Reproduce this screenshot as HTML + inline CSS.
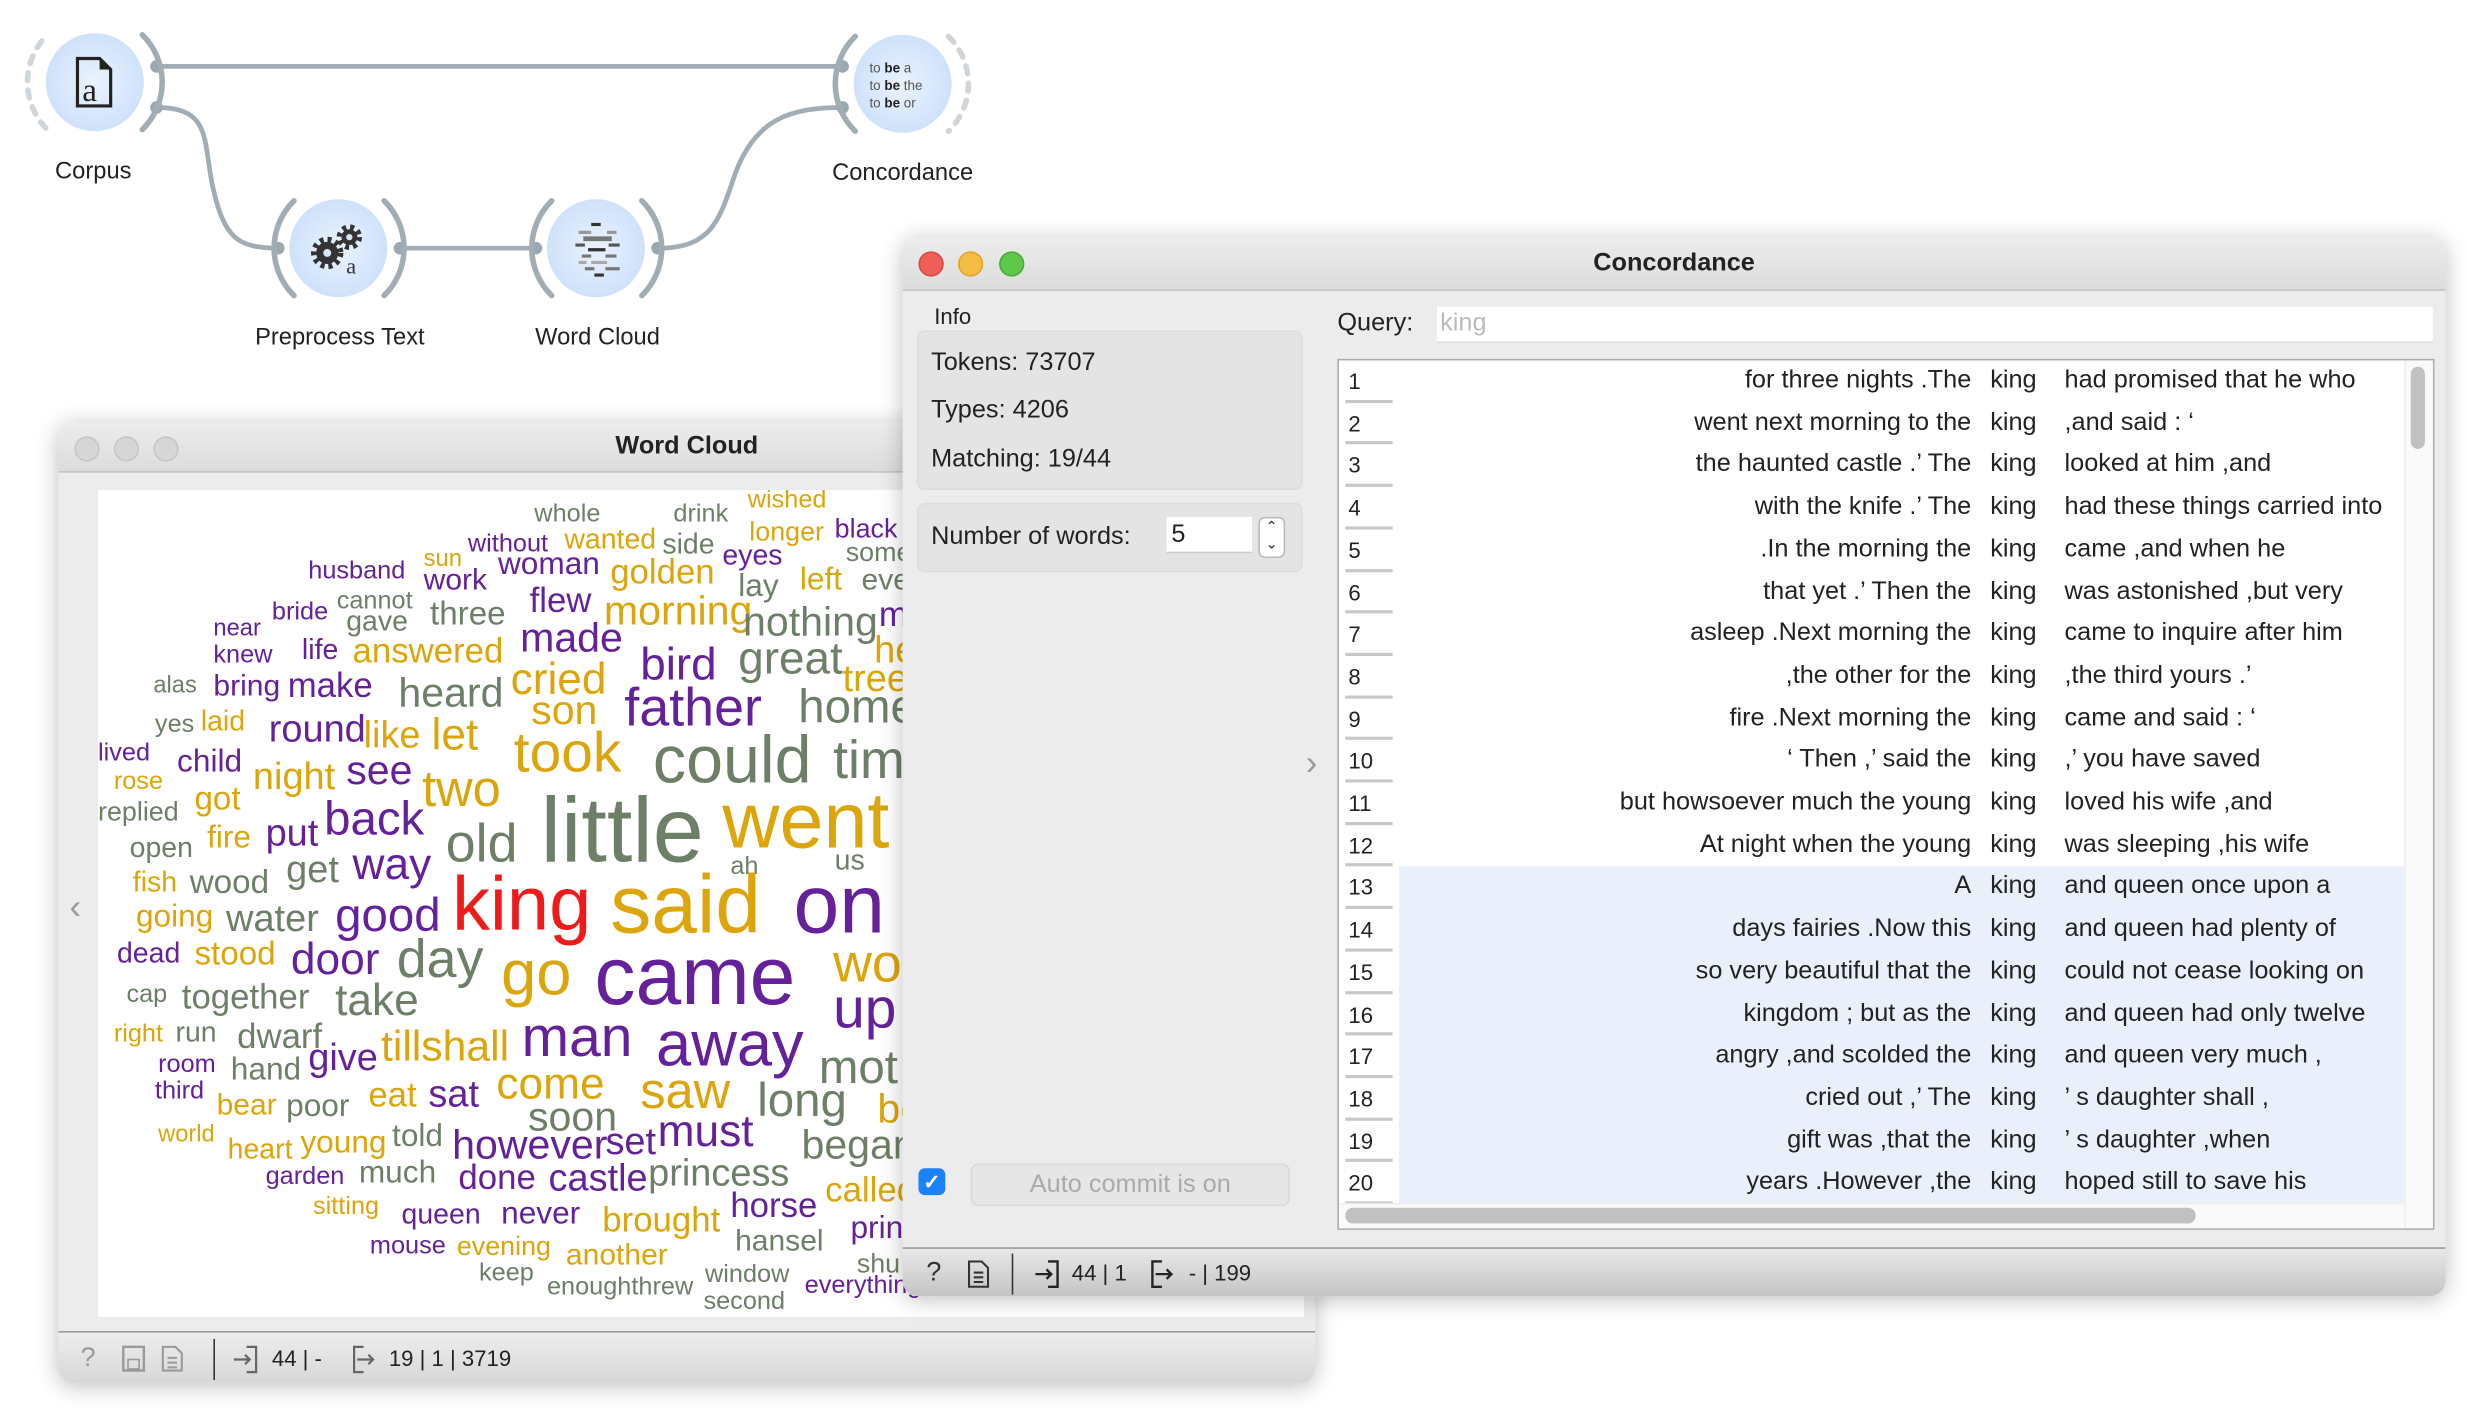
<!DOCTYPE html>
<html><head><meta charset="utf-8">
<style>
html,body{margin:0;padding:0;background:#fff;overflow:hidden;width:2466px;height:1414px}
#s{position:absolute;left:0;top:0;width:1560px;height:895px;transform:scale(1.5808);transform-origin:0 0;font-family:"Liberation Sans",sans-serif;color:#222}
.abs{position:absolute}
.lbl{position:absolute;font-size:15px;color:#222;transform:translateX(-50%);white-space:nowrap}
.win{position:absolute;background:#ececec;border-radius:10px;overflow:hidden;box-shadow:0 2px 14px rgba(0,0,0,.25)}
.tb{position:absolute;left:0;right:0;top:0;background:linear-gradient(#ededed,#dcdcdc);border-bottom:1px solid #c2c2c2;font-weight:bold;font-size:16px;text-align:center}
.dot{position:absolute;width:14px;height:14px;border-radius:50%}
.wc span{position:absolute;white-space:nowrap;line-height:1}
.p{color:#65219a}.g{color:#6e7f68}.y{color:#dca50c}.r{color:#ee1b1b}
.sb{position:absolute;left:0;right:0;bottom:0;background:linear-gradient(#ededed,#d7d7d7);border-top:1px solid #9a9a9a;font-size:14px}
.row{position:absolute;left:0;right:0;height:26.7px;font-size:16px;line-height:26.7px}
.row .n{position:absolute;left:0;width:38px;padding-left:6px;box-sizing:border-box;font-size:14px}
.row .n:after{content:"";position:absolute;left:4px;right:4px;bottom:0;height:2px;background:#c8c8c8}
.row .l{position:absolute;right:274px;white-space:nowrap}
.row .k{position:absolute;left:412px}
.row .rc{position:absolute;left:459px;white-space:nowrap}
</style></head><body><div id="s">

<svg class="abs" style="left:0;top:0" width="640" height="240">
<defs><radialGradient id="ng" cx="50%" cy="50%" r="50%"><stop offset="0" stop-color="#eaf2fd"/><stop offset="1" stop-color="#cfe2fb"/></radialGradient></defs>
<g fill="none" stroke="#a1adb5" stroke-width="3">
<path d="M99,42 L533,42"/>
<path d="M99,68 C135,68 128,90 135,120 C142,150 150,157 176,157"/>
<path d="M253,157 L339,157"/>
<path d="M416,157 C450,157 455,140 465,110 C478,75 500,68 533,68"/>
</g>
<g fill="#9aa8b0"><circle cx="99" cy="42" r="4"/><circle cx="99" cy="68" r="4"/><circle cx="533" cy="42" r="4"/><circle cx="533" cy="68" r="4"/><circle cx="176" cy="157" r="4"/><circle cx="253" cy="157" r="4"/><circle cx="339" cy="157" r="4"/><circle cx="416" cy="157" r="4"/></g>
<circle cx="60" cy="52" r="31" fill="url(#ng)"/>
<circle cx="214" cy="157" r="31" fill="url(#ng)"/>
<circle cx="377" cy="157" r="31" fill="url(#ng)"/>
<circle cx="571" cy="53" r="31" fill="url(#ng)"/>
<g fill="none" stroke="#a1adb5" stroke-width="3.5" stroke-linecap="round">
<path d="M31,23 A42,42 0 0 1 31,81" stroke="#cfd5d9" stroke-dasharray="5,6" transform="translate(-2,0) rotate(180 31 52)"/>
<path d="M90,22 A42,42 0 0 1 90,82"/>
<path d="M186,127 A42,42 0 0 0 186,187"/><path d="M243,127 A42,42 0 0 1 243,187"/>
<path d="M349,127 A42,42 0 0 0 349,187"/><path d="M406,127 A42,42 0 0 1 406,187"/>
<path d="M541,23 A42,42 0 0 0 541,83"/>
<path d="M600,23 A42,42 0 0 1 600,83" stroke="#cfd5d9" stroke-dasharray="5,6"/>
</g>
<path d="M49,37 H63 L70,44 V67 H49 Z" fill="none" stroke="#222" stroke-width="2"/>
<path d="M63,37 V44 H70" fill="#222"/>
<text x="52" y="64" font-family="Liberation Serif" font-size="21" fill="#222">a</text>
<g fill="#333"><circle cx="207" cy="160" r="7"/><circle cx="221" cy="150" r="5"/></g>
<g stroke="#333" stroke-width="3.5" stroke-dasharray="2.5,2.5"><circle cx="207" cy="160" r="8.5" fill="none"/><circle cx="221" cy="150" r="6.3" fill="none"/></g>
<circle cx="207" cy="160" r="2.5" fill="#d5e6fb"/><circle cx="221" cy="150" r="2" fill="#d5e6fb"/>
<text x="219" y="173" font-family="Liberation Serif" font-size="14" fill="#333">a</text>
<g stroke-width="2"><path d="M374,142h6" stroke="#333"/><path d="M366,147h8M384,147h6" stroke="#999"/><path d="M369,151h18" stroke="#777" stroke-width="3"/><path d="M364,155h6M385,155h7" stroke="#555"/><path d="M372,158h11" stroke="#333"/><path d="M368,162h6M383,162h7" stroke="#777"/><path d="M366,166h5M374,166h10" stroke="#aaa"/><path d="M370,170h6M383,170h9" stroke="#777"/><path d="M376,174h6" stroke="#333"/></g>
<text font-size="8.5" fill="#555" font-family="Liberation Sans"><tspan x="550" y="46">to <tspan font-weight="bold" fill="#222">be</tspan> a</tspan><tspan x="550" y="57">to <tspan font-weight="bold" fill="#222">be</tspan> the</tspan><tspan x="550" y="68">to <tspan font-weight="bold" fill="#222">be</tspan> or</tspan></text>
</svg>
<div class="lbl" style="left:59px;top:100px">Corpus</div>
<div class="lbl" style="left:571px;top:101px">Concordance</div>
<div class="lbl" style="left:215px;top:205px">Preprocess Text</div>
<div class="lbl" style="left:378px;top:205px">Word Cloud</div>

<div class="win" style="left:37px;top:267px;width:795px;height:608px">
 <div class="tb" style="height:31px;line-height:31px;color:#222">Word Cloud</div>
 <div class="dot" style="left:10px;top:9px;background:#d6d6d6;border:1px solid #c6c6c6"></div>
 <div class="dot" style="left:35px;top:9px;background:#d6d6d6;border:1px solid #c6c6c6"></div>
 <div class="dot" style="left:60px;top:9px;background:#d6d6d6;border:1px solid #c6c6c6"></div>
 <div class="abs" style="left:7px;top:294px;font-size:22px;color:#999">‹</div>
 <div class="abs wc" style="left:25px;top:43px;width:763px;height:523px;background:#fff;overflow:hidden">
 <div class="abs" style="left:-62px;top:-310px;width:900px;height:900px">
<span class="g" style="left:338px;top:318px;font-size:16px">whole</span>
<span class="g" style="left:426px;top:318px;font-size:16px">drink</span>
<span class="y" style="left:473px;top:309px;font-size:16px">wished</span>
<span class="p" style="left:296px;top:337px;font-size:16px">without</span>
<span class="y" style="left:357px;top:332px;font-size:18px">wanted</span>
<span class="g" style="left:419px;top:335px;font-size:18px">side</span>
<span class="y" style="left:474px;top:328px;font-size:17px">longer</span>
<span class="p" style="left:528px;top:326px;font-size:17px">black</span>
<span class="p" style="left:457px;top:342px;font-size:18px">eyes</span>
<span class="g" style="left:535px;top:341px;font-size:17px">some</span>
<span class="p" style="left:195px;top:354px;font-size:16px">husband</span>
<span class="y" style="left:268px;top:346px;font-size:15px">sun</span>
<span class="p" style="left:268px;top:358px;font-size:19px">work</span>
<span class="p" style="left:315px;top:347px;font-size:20px">woman</span>
<span class="y" style="left:386px;top:351px;font-size:22px">golden</span>
<span class="g" style="left:467px;top:361px;font-size:20px">lay</span>
<span class="y" style="left:506px;top:357px;font-size:20px">left</span>
<span class="g" style="left:545px;top:358px;font-size:19px">eve</span>
<span class="p" style="left:172px;top:380px;font-size:16px">bride</span>
<span class="g" style="left:213px;top:373px;font-size:16px">cannot</span>
<span class="g" style="left:219px;top:384px;font-size:18px">gave</span>
<span class="g" style="left:272px;top:378px;font-size:21px">three</span>
<span class="p" style="left:335px;top:369px;font-size:22px">flew</span>
<span class="y" style="left:382px;top:373px;font-size:26px">morning</span>
<span class="g" style="left:470px;top:380px;font-size:26px">nothing</span>
<span class="p" style="left:556px;top:378px;font-size:22px">m</span>
<span class="p" style="left:135px;top:390px;font-size:15px">near</span>
<span class="p" style="left:135px;top:407px;font-size:16px">knew</span>
<span class="p" style="left:191px;top:402px;font-size:18px">life</span>
<span class="y" style="left:223px;top:401px;font-size:22px">answered</span>
<span class="p" style="left:329px;top:390px;font-size:26px">made</span>
<span class="p" style="left:405px;top:407px;font-size:29px">bird</span>
<span class="g" style="left:467px;top:403px;font-size:29px">great</span>
<span class="y" style="left:553px;top:400px;font-size:24px">he</span>
<span class="y" style="left:533px;top:418px;font-size:24px">tree</span>
<span class="g" style="left:97px;top:426px;font-size:15px">alas</span>
<span class="p" style="left:135px;top:425px;font-size:19px">bring</span>
<span class="p" style="left:182px;top:423px;font-size:22px">make</span>
<span class="g" style="left:252px;top:425px;font-size:26px">heard</span>
<span class="y" style="left:323px;top:416px;font-size:28px">cried</span>
<span class="y" style="left:336px;top:436px;font-size:26px">son</span>
<span class="p" style="left:395px;top:431px;font-size:34px">father</span>
<span class="g" style="left:505px;top:433px;font-size:30px">home</span>
<span class="g" style="left:98px;top:451px;font-size:16px">yes</span>
<span class="y" style="left:127px;top:447px;font-size:18px">laid</span>
<span class="p" style="left:170px;top:450px;font-size:24px">round</span>
<span class="y" style="left:230px;top:454px;font-size:24px">like</span>
<span class="y" style="left:273px;top:451px;font-size:28px">let</span>
<span class="y" style="left:325px;top:458px;font-size:36px">took</span>
<span class="g" style="left:413px;top:460px;font-size:42px">could</span>
<span class="g" style="left:527px;top:464px;font-size:34px">time</span>
<span class="p" style="left:62px;top:469px;font-size:16px">lived</span>
<span class="p" style="left:112px;top:472px;font-size:20px">child</span>
<span class="y" style="left:72px;top:487px;font-size:16px">rose</span>
<span class="y" style="left:160px;top:480px;font-size:24px">night</span>
<span class="p" style="left:219px;top:474px;font-size:26px">see</span>
<span class="y" style="left:267px;top:483px;font-size:32px">two</span>
<span class="g" style="left:62px;top:505px;font-size:17px">replied</span>
<span class="y" style="left:123px;top:495px;font-size:21px">got</span>
<span class="p" style="left:205px;top:504px;font-size:30px">back</span>
<span class="g" style="left:82px;top:527px;font-size:18px">open</span>
<span class="y" style="left:131px;top:520px;font-size:20px">fire</span>
<span class="p" style="left:168px;top:516px;font-size:24px">put</span>
<span class="g" style="left:282px;top:517px;font-size:34px">old</span>
<span class="g" style="left:342px;top:497px;font-size:58px">little</span>
<span class="y" style="left:457px;top:494px;font-size:50px">went</span>
<span class="p" style="left:223px;top:533px;font-size:28px">way</span>
<span class="y" style="left:84px;top:549px;font-size:18px">fish</span>
<span class="g" style="left:120px;top:548px;font-size:21px">wood</span>
<span class="g" style="left:181px;top:539px;font-size:24px">get</span>
<span class="g" style="left:462px;top:541px;font-size:16px">ah</span>
<span class="g" style="left:528px;top:535px;font-size:18px">us</span>
<span class="y" style="left:86px;top:570px;font-size:20px">going</span>
<span class="g" style="left:143px;top:570px;font-size:24px">water</span>
<span class="p" style="left:212px;top:565px;font-size:30px">good</span>
<span class="r" style="left:286px;top:549px;font-size:48px">king</span>
<span class="y" style="left:386px;top:547px;font-size:52px">said</span>
<span class="p" style="left:502px;top:547px;font-size:52px">on</span>
<span class="p" style="left:74px;top:594px;font-size:18px">dead</span>
<span class="y" style="left:123px;top:593px;font-size:21px">stood</span>
<span class="p" style="left:184px;top:593px;font-size:28px">door</span>
<span class="g" style="left:251px;top:590px;font-size:34px">day</span>
<span class="y" style="left:317px;top:596px;font-size:40px">go</span>
<span class="p" style="left:376px;top:592px;font-size:52px">came</span>
<span class="y" style="left:527px;top:593px;font-size:34px">wo</span>
<span class="g" style="left:80px;top:622px;font-size:16px">cap</span>
<span class="g" style="left:115px;top:620px;font-size:22px">together</span>
<span class="g" style="left:212px;top:619px;font-size:28px">take</span>
<span class="p" style="left:527px;top:620px;font-size:36px">up</span>
<span class="y" style="left:72px;top:647px;font-size:16px">right</span>
<span class="g" style="left:111px;top:644px;font-size:18px">run</span>
<span class="g" style="left:150px;top:645px;font-size:22px">dwarf</span>
<span class="p" style="left:195px;top:658px;font-size:24px">give</span>
<span class="y" style="left:241px;top:649px;font-size:27px">tillshall</span>
<span class="p" style="left:330px;top:638px;font-size:36px">man</span>
<span class="p" style="left:415px;top:641px;font-size:40px">away</span>
<span class="g" style="left:518px;top:661px;font-size:30px">mot</span>
<span class="p" style="left:100px;top:666px;font-size:16px">room</span>
<span class="g" style="left:146px;top:667px;font-size:20px">hand</span>
<span class="p" style="left:98px;top:683px;font-size:16px">third</span>
<span class="y" style="left:137px;top:690px;font-size:19px">bear</span>
<span class="g" style="left:181px;top:690px;font-size:20px">poor</span>
<span class="y" style="left:233px;top:682px;font-size:22px">eat</span>
<span class="p" style="left:271px;top:681px;font-size:24px">sat</span>
<span class="y" style="left:314px;top:672px;font-size:28px">come</span>
<span class="y" style="left:405px;top:674px;font-size:32px">saw</span>
<span class="g" style="left:479px;top:682px;font-size:30px">long</span>
<span class="y" style="left:555px;top:688px;font-size:26px">be</span>
<span class="g" style="left:334px;top:693px;font-size:26px">soon</span>
<span class="y" style="left:100px;top:710px;font-size:15px">world</span>
<span class="y" style="left:144px;top:718px;font-size:18px">heart</span>
<span class="y" style="left:190px;top:713px;font-size:20px">young</span>
<span class="g" style="left:248px;top:709px;font-size:20px">told</span>
<span class="p" style="left:286px;top:711px;font-size:26px">however</span>
<span class="p" style="left:383px;top:711px;font-size:24px">set</span>
<span class="p" style="left:416px;top:702px;font-size:28px">must</span>
<span class="g" style="left:507px;top:711px;font-size:26px">began</span>
<span class="p" style="left:168px;top:737px;font-size:16px">garden</span>
<span class="g" style="left:227px;top:732px;font-size:20px">much</span>
<span class="p" style="left:290px;top:734px;font-size:22px">done</span>
<span class="p" style="left:347px;top:734px;font-size:24px">castle</span>
<span class="g" style="left:410px;top:731px;font-size:24px">princess</span>
<span class="y" style="left:522px;top:742px;font-size:22px">called</span>
<span class="y" style="left:198px;top:756px;font-size:16px">sitting</span>
<span class="p" style="left:254px;top:759px;font-size:18px">queen</span>
<span class="p" style="left:317px;top:758px;font-size:20px">never</span>
<span class="y" style="left:381px;top:761px;font-size:22px">brought</span>
<span class="p" style="left:462px;top:752px;font-size:22px">horse</span>
<span class="p" style="left:538px;top:767px;font-size:20px">prin</span>
<span class="p" style="left:234px;top:781px;font-size:16px">mouse</span>
<span class="y" style="left:289px;top:780px;font-size:17px">evening</span>
<span class="y" style="left:358px;top:785px;font-size:19px">another</span>
<span class="g" style="left:465px;top:776px;font-size:19px">hansel</span>
<span class="g" style="left:542px;top:791px;font-size:17px">shu</span>
<span class="g" style="left:303px;top:798px;font-size:16px">keep</span>
<span class="g" style="left:446px;top:799px;font-size:16px">window</span>
<span class="g" style="left:346px;top:807px;font-size:16px">enoughthrew</span>
<span class="p" style="left:509px;top:806px;font-size:16px">everything</span>
<span class="g" style="left:445px;top:816px;font-size:16px">second</span>
 </div></div>
 <div class="sb" style="height:32px">
  <span class="abs" style="left:14px;top:6px;color:#999;font-size:17px">?</span>
  <svg class="abs" style="left:40px;top:8px" width="40" height="18"><rect x="1" y="1" width="13" height="15" fill="none" stroke="#999" stroke-width="1.5"/><rect x="4" y="9" width="7" height="6" fill="none" stroke="#999"/><path d="M26,1h8l4,4v11h-12z M29,8h6M29,11h6M29,14h6" fill="none" stroke="#999" stroke-width="1.3"/></svg>
  <div class="abs" style="left:98px;top:4px;width:1px;height:26px;background:#333"></div>
  <svg class="abs" style="left:110px;top:8px" width="20" height="18"><path d="M9,1h6v16h-6M1,9h10M8,6l3,3-3,3" fill="none" stroke="#666" stroke-width="1.4"/></svg>
  <span class="abs" style="left:135px;top:8px">44 | -</span>
  <svg class="abs" style="left:184px;top:8px" width="20" height="18"><path d="M9,1h-6v16h6M5,9h10M12,6l3,3-3,3" fill="none" stroke="#666" stroke-width="1.4"/></svg>
  <span class="abs" style="left:209px;top:8px">19 | 1 | 3719</span>
 </div>
</div>

<div class="win" style="left:571px;top:150px;width:976px;height:670px">
 <div class="tb" style="height:33px;line-height:33px;color:#222">Concordance</div>
 <div class="dot" style="left:10px;top:9px;background:#ed5f57;border:1px solid #d9473f"></div>
 <div class="dot" style="left:35px;top:9px;background:#f4bd41;border:1px solid #dea42a"></div>
 <div class="dot" style="left:61px;top:9px;background:#5fc84a;border:1px solid #47ad35"></div>
 <div class="abs" style="left:20px;top:42px;font-size:14px">Info</div>
 <div class="abs" style="left:9px;top:59px;width:242px;height:99px;background:#e4e4e4;border:1px solid #dcdcdc;border-radius:5px;font-size:16px">
  <div class="abs" style="left:8px;top:11px">Tokens: 73707</div>
  <div class="abs" style="left:8px;top:41px">Types: 4206</div>
  <div class="abs" style="left:8px;top:72px">Matching: 19/44</div>
 </div>
 <div class="abs" style="left:9px;top:168px;width:242px;height:42px;background:#e4e4e4;border:1px solid #dcdcdc;border-radius:5px;font-size:16px">
  <div class="abs" style="left:8px;top:12px">Number of words:</div>
  <div class="abs" style="left:157px;top:8px;width:54px;height:23px;background:#fff;border-bottom:1px solid #ccc;line-height:23px;padding-left:3px;box-sizing:border-box">5</div>
  <div class="abs" style="left:215px;top:8px;width:15px;height:24px;background:#fff;border:1px solid #bbb;border-radius:4px;font-size:9px;text-align:center;line-height:11px">⌃<br>⌄</div>
 </div>
 <div class="abs" style="left:10px;top:589px;width:17px;height:17px;background:#1a82fb;border-radius:4px;color:#fff;font-size:13px;text-align:center;line-height:17px;font-weight:bold">✓</div>
 <div class="abs" style="left:43px;top:586px;width:200px;height:25px;background:#e6e6e6;border:1px solid #d8d8d8;border-radius:5px;color:#aaa;font-size:16px;text-align:center;line-height:25px">Auto commit is on</div>
 <div class="abs" style="left:255px;top:320px;font-size:22px;color:#999">›</div>
 <div class="abs" style="left:275px;top:46px;font-size:16px">Query:</div>
 <div class="abs" style="left:338px;top:44px;width:628px;height:22px;background:#fff;border-bottom:1px solid #ddd;color:#bbb;font-size:16px;line-height:22px;padding-left:2px">king</div>
 <div class="abs" style="left:275px;top:77px;width:692px;height:549px;background:#fff;border:1px solid #aaa;overflow:hidden">
  <div class="abs" style="left:38px;top:320px;width:636px;height:213px;background:#e9f0fc"></div>
  <div class="abs" style="left:0;top:0;width:674px;height:533px">
<div class="row" style="top:0"><span class="n">1</span><span class="l">for three nights .The</span><span class="k">king</span><span class="rc">had promised that he who</span></div>
<div class="row" style="top:26.7px"><span class="n">2</span><span class="l">went next morning to the</span><span class="k">king</span><span class="rc">,and said : ‘</span></div>
<div class="row" style="top:53.4px"><span class="n">3</span><span class="l">the haunted castle .’ The</span><span class="k">king</span><span class="rc">looked at him ,and</span></div>
<div class="row" style="top:80.1px;overflow:hidden"><span class="n">4</span><span class="l">with the knife .’ The</span><span class="k">king</span><span class="rc" style="width:214px;overflow:hidden">had these things carried into</span></div>
<div class="row" style="top:106.8px"><span class="n">5</span><span class="l">.In the morning the</span><span class="k">king</span><span class="rc">came ,and when he</span></div>
<div class="row" style="top:133.5px"><span class="n">6</span><span class="l">that yet .’ Then the</span><span class="k">king</span><span class="rc">was astonished ,but very</span></div>
<div class="row" style="top:160.2px"><span class="n">7</span><span class="l">asleep .Next morning the</span><span class="k">king</span><span class="rc">came to inquire after him</span></div>
<div class="row" style="top:186.9px"><span class="n">8</span><span class="l">,the other for the</span><span class="k">king</span><span class="rc">,the third yours .’</span></div>
<div class="row" style="top:213.6px"><span class="n">9</span><span class="l">fire .Next morning the</span><span class="k">king</span><span class="rc">came and said : ‘</span></div>
<div class="row" style="top:240.3px"><span class="n">10</span><span class="l">‘ Then ,’ said the</span><span class="k">king</span><span class="rc">,’ you have saved</span></div>
<div class="row" style="top:267px"><span class="n">11</span><span class="l">but howsoever much the young</span><span class="k">king</span><span class="rc">loved his wife ,and</span></div>
<div class="row" style="top:293.7px"><span class="n">12</span><span class="l">At night when the young</span><span class="k">king</span><span class="rc">was sleeping ,his wife</span></div>
<div class="row" style="top:320.4px"><span class="n">13</span><span class="l">A</span><span class="k">king</span><span class="rc">and queen once upon a</span></div>
<div class="row" style="top:347.1px"><span class="n">14</span><span class="l">days fairies .Now this</span><span class="k">king</span><span class="rc">and queen had plenty of</span></div>
<div class="row" style="top:373.8px"><span class="n">15</span><span class="l">so very beautiful that the</span><span class="k">king</span><span class="rc">could not cease looking on</span></div>
<div class="row" style="top:400.5px"><span class="n">16</span><span class="l">kingdom ; but as the</span><span class="k">king</span><span class="rc">and queen had only twelve</span></div>
<div class="row" style="top:427.2px"><span class="n">17</span><span class="l">angry ,and scolded the</span><span class="k">king</span><span class="rc">and queen very much ,</span></div>
<div class="row" style="top:453.9px"><span class="n">18</span><span class="l">cried out ,’ The</span><span class="k">king</span><span class="rc">’ s daughter shall ,</span></div>
<div class="row" style="top:480.6px"><span class="n">19</span><span class="l">gift was ,that the</span><span class="k">king</span><span class="rc">’ s daughter ,when</span></div>
<div class="row" style="top:507.3px"><span class="n">20</span><span class="l">years .However ,the</span><span class="k">king</span><span class="rc">hoped still to save his</span></div>
  </div>
  <div class="abs" style="left:674px;top:0;width:18px;height:549px;background:#fafafa;border-left:1px solid #eee"></div>
  <div class="abs" style="left:678px;top:4px;width:9px;height:52px;background:#c1c1c1;border-radius:5px"></div>
  <div class="abs" style="left:0;top:533px;width:674px;height:16px;background:#fafafa;border-top:1px solid #eee"></div>
  <div class="abs" style="left:4px;top:536px;width:538px;height:10px;background:#c1c1c1;border-radius:5px"></div>
 </div>
 <div class="sb" style="height:30px;background:linear-gradient(#e8e8e8,#c4c4c4)">
  <span class="abs" style="left:15px;top:5px;color:#333;font-size:17px">?</span>
  <svg class="abs" style="left:40px;top:7px" width="16" height="18"><path d="M2,1h8l4,4v12h-12z M5,8h6M5,11h6M5,14h6" fill="none" stroke="#333" stroke-width="1.3"/></svg>
  <div class="abs" style="left:69px;top:3px;width:1px;height:26px;background:#333"></div>
  <svg class="abs" style="left:83px;top:7px" width="20" height="18"><path d="M9,1h6v16h-6M1,9h10M8,6l3,3-3,3" fill="none" stroke="#222" stroke-width="1.5"/></svg>
  <span class="abs" style="left:107px;top:7px">44 | 1</span>
  <svg class="abs" style="left:155px;top:7px" width="20" height="18"><path d="M9,1h-6v16h6M5,9h10M12,6l3,3-3,3" fill="none" stroke="#222" stroke-width="1.5"/></svg>
  <span class="abs" style="left:181px;top:7px">- | 199</span>
 </div>
</div>

</div></body></html>
